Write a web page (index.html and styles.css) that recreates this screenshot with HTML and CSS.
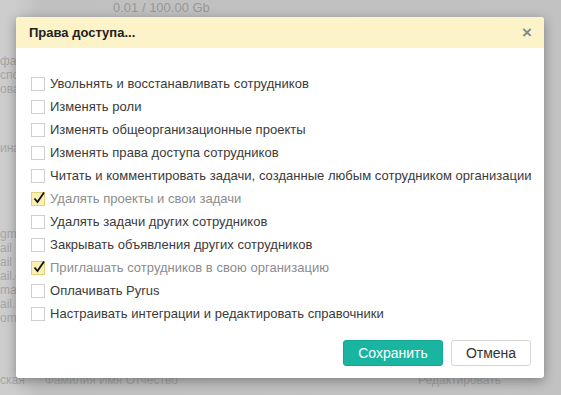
FILE: index.html
```html
<!DOCTYPE html>
<html lang="ru">
<head>
<meta charset="utf-8">
<link rel="stylesheet" href="styles.css">
</head>
<body>
<div class="page">
  <div class="quota">0.01 / 100.00 Gb</div>
  <div class="side">
    <div class="side-line s1">фа</div>
    <div class="side-line">спо</div>
    <div class="side-line">ова</div>
    <div class="side-line s2">ина</div>
    <div class="side-line s3">gm</div>
    <div class="side-line">ail</div>
    <div class="side-line">ail</div>
    <div class="side-line">ail.c</div>
    <div class="side-line">ma</div>
    <div class="side-line">ail.r</div>
    <div class="side-line">om</div>
  </div>
  <div class="footer-line"><span>ская</span><span class="fio">Фамилия Имя Отчество</span><span class="edit">Редактировать</span></div>
</div>
<div class="overlay"></div>
<div class="modal">
  <div class="modal-head">
    <span class="modal-title">Права доступа...</span>
    <span class="modal-close">×</span>
  </div>
  <div class="modal-body">
    <label class="row"><span class="box"></span><span class="lbl">Увольнять и восстанавливать сотрудников</span></label>
    <label class="row"><span class="box"></span><span class="lbl">Изменять роли</span></label>
    <label class="row"><span class="box"></span><span class="lbl">Изменять общеорганизационные проекты</span></label>
    <label class="row"><span class="box"></span><span class="lbl">Изменять права доступа сотрудников</span></label>
    <label class="row"><span class="box"></span><span class="lbl">Читать и комментировать задачи, созданные любым сотрудником организации</span></label>
    <label class="row checked"><span class="box"><svg viewBox="0 0 14 14" width="14" height="14"><path d="M2.5 7.5 L5.5 11 L12 1.5" fill="none" stroke="#111" stroke-width="1.8"/></svg></span><span class="lbl">Удалять проекты и свои задачи</span></label>
    <label class="row"><span class="box"></span><span class="lbl">Удалять задачи других сотрудников</span></label>
    <label class="row"><span class="box"></span><span class="lbl">Закрывать объявления других сотрудников</span></label>
    <label class="row checked"><span class="box"><svg viewBox="0 0 14 14" width="14" height="14"><path d="M2.5 7.5 L5.5 11 L12 1.5" fill="none" stroke="#111" stroke-width="1.8"/></svg></span><span class="lbl">Приглашать сотрудников в свою организацию</span></label>
    <label class="row"><span class="box"></span><span class="lbl">Оплачивать Pyrus</span></label>
    <label class="row"><span class="box"></span><span class="lbl">Настраивать интеграции и редактировать справочники</span></label>
  </div>
  <div class="modal-foot">
    <button class="btn btn-save">Сохранить</button>
    <button class="btn btn-cancel">Отмена</button>
  </div>
</div>
</body>
</html>
```
FILE: styles.css
```css
* { box-sizing: border-box; }
html, body { margin: 0; padding: 0; }
body {
  width: 561px;
  height: 395px;
  overflow: hidden;
  font-family: "Liberation Sans", Arial, sans-serif;
  background: #c9c9c9;
  position: relative;
}
.page {
  height: 395px;
  color: #a9a9a9;
  font-size: 13px;
  background: linear-gradient(to right, #d2d2d2 0, #d2d2d2 14px, #c4c4c4 40px, #c6c6c6 100%);
}
.quota {
  padding-left: 113px;
  font-size: 13px;
  line-height: 16px;
  color: #9c9c9c;
}
.side {
  padding-top: 38px;
  display: flex;
  flex-direction: column;
  font-size: 12px;
  line-height: 14px;
}
.side-line { height: 14px; }
.s2 { margin-top: 45px; }
.s3 { margin-top: 72px; }
.footer-line {
  position: absolute;
  left: 0;
  top: 373px;
  width: 561px;
  display: flex;
  font-size: 12px;
  color: #a9a9a9;
}
.fio { margin-left: 20px; }
.edit { margin-left: auto; margin-right: 60px; }
.overlay {
  position: absolute;
  inset: 0;
  background: rgba(0,0,0,0.02);
}
.modal {
  position: absolute;
  left: 16px;
  top: 17px;
  width: 528px;
  height: 361px;
  background: #fff;
  border-radius: 3px;
  box-shadow: 0 3px 12px rgba(0,0,0,0.35);
  display: flex;
  flex-direction: column;
}
.modal-head {
  height: 31px;
  background: #fcf3c9;
  border-radius: 3px 3px 0 0;
  display: flex;
  align-items: center;
  padding: 0 12px 0 13px;
}
.modal-title {
  font-weight: bold;
  font-size: 13px;
  color: #222;
}
.modal-close {
  margin-left: auto;
  font-size: 17px;
  font-weight: bold;
  color: #8a8a7a;
  line-height: 1;
}
.modal-body {
  padding: 24px 0 0 15px;
  display: flex;
  flex-direction: column;
}
.row {
  height: 23px;
  display: flex;
  align-items: center;
  font-size: 13px;
  color: #3a3a3a;
  letter-spacing: 0.03px;
}
.box {
  width: 14px;
  height: 14px;
  border: 1px solid #cfcfcf;
  background: #fff;
  margin-right: 5px;
  flex: none;
  position: relative;
}
.box svg { position: absolute; left: 0; top: -2px; }
.row.checked .box {
  background: #fbf0b4;
  border-color: #e0d27a;
}
.row.checked .lbl { color: #8c8c8c; }
.modal-foot {
  margin-top: auto;
  padding: 0 13px 12px 0;
  display: flex;
  justify-content: flex-end;
  gap: 8px;
}
.btn {
  height: 26px;
  font-family: "Liberation Sans", Arial, sans-serif;
  font-size: 14px;
  border-radius: 3px;
  padding: 0;
  cursor: pointer;
}
.btn-save {
  width: 100px;
  background: #19b5a1;
  border: 1px solid #17a795;
  color: #fff;
}
.btn-cancel {
  width: 80px;
  background: #fff;
  border: 1px solid #d6d6d6;
  color: #333;
}
```
